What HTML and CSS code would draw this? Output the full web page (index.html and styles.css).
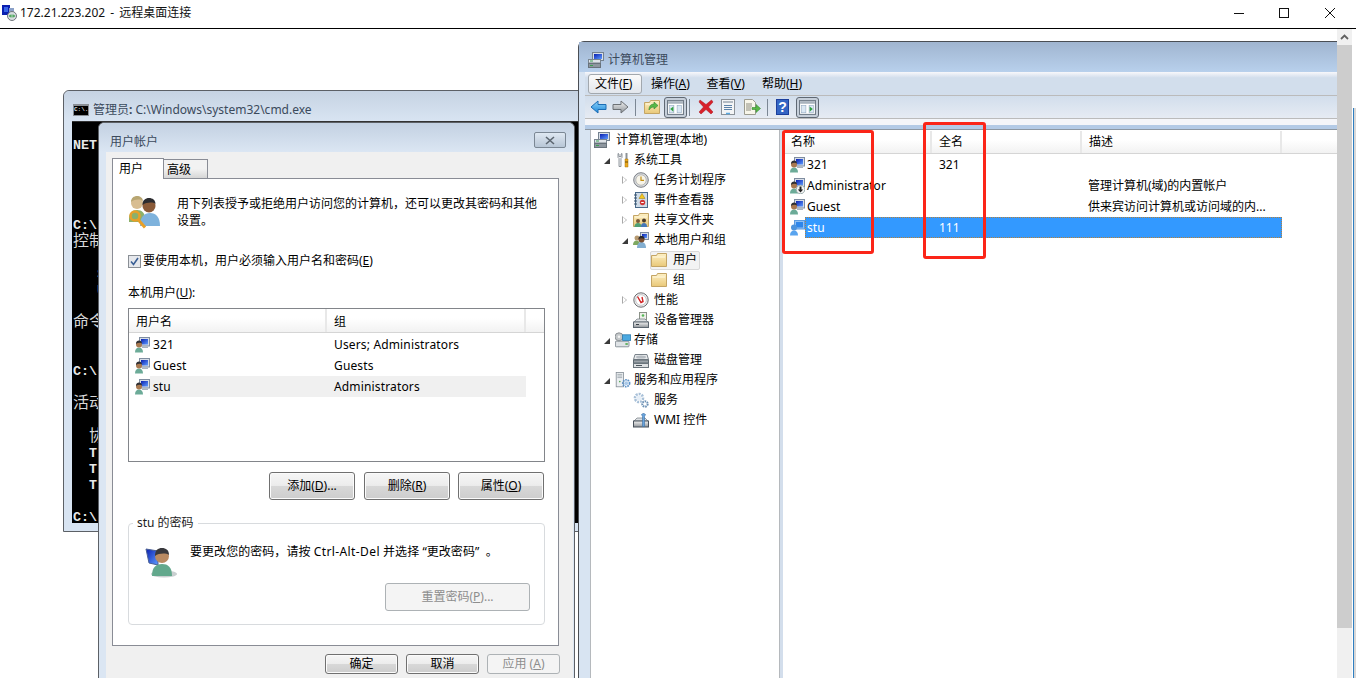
FILE: index.html
```html
<!DOCTYPE html>
<html lang="zh-CN">
<head>
<meta charset="utf-8">
<title>172.21.223.202 - 远程桌面连接</title>
<link rel="stylesheet" href="styles.css">
</head>
<body>
<svg class="defs" width="0" height="0" aria-hidden="true">
  <defs>
    <linearGradient id="gScreen" x1="0" y1="0" x2="1" y2="1"><stop offset="0" stop-color="#0a1fb0"/><stop offset="1" stop-color="#5f9cff"/></linearGradient>
    <linearGradient id="gFolder" x1="0" y1="0" x2="0" y2="1"><stop offset="0" stop-color="#fdf0c4"/><stop offset="1" stop-color="#e9c878"/></linearGradient>
    <linearGradient id="gBlueArrow" x1="0" y1="0" x2="0" y2="1"><stop offset="0" stop-color="#8fd4fb"/><stop offset="1" stop-color="#1c86d8"/></linearGradient>
    <linearGradient id="gGreyBox" x1="0" y1="0" x2="0" y2="1"><stop offset="0" stop-color="#f2f2f2"/><stop offset="1" stop-color="#8f9499"/></linearGradient>

    <symbol id="i-user" viewBox="0 0 16 16">
      <rect x="5.5" y="0.5" width="10" height="8.5" fill="#d6dde8" stroke="#7f8da0"/>
      <rect x="7" y="2" width="7" height="5.5" fill="url(#gScreen)"/>
      <path d="M8 9.5h6v1.5h-6z" fill="#aab4c0"/>
      <path d="M1 15.5c0-3.5 1.8-5 4-5s4 1.5 4 5z" fill="#6cab98"/>
      <circle cx="5" cy="7.5" r="3" fill="#a87850"/>
      <path d="M2 7c0-2.8 1.5-3.6 3-3.6S8 4.500 8 6.500C6.500 5.500 4 5.500 2 7z" fill="#2f2f33"/>
    </symbol>
    <symbol id="i-user-admin" viewBox="0 0 16 16">
      <use href="#i-user"/>
      <circle cx="11.500" cy="11.500" r="4.300" fill="#f4f4f4" stroke="#9aa"/>
      <path d="M10.500 8.500h2v3h1.700l-2.700 3-2.700-3h1.700z" fill="#222"/>
    </symbol>
    <symbol id="i-user-sel" viewBox="0 0 16 16">
      <rect x="5.500" y="0.500" width="10" height="8.500" fill="#8fc0f4" stroke="#5b9ae0"/>
      <rect x="7" y="2" width="7" height="5.500" fill="#2f86ea"/>
      <path d="M1 15.500c0-3.500 1.800-5 4-5s4 1.500 4 5z" fill="#59a4ef"/>
      <circle cx="5" cy="7.500" r="3" fill="#4c93dd"/>
    </symbol>
    <symbol id="i-users-key" viewBox="0 0 32 34">
      <path d="M1 24c0-6 3-9 8-9s8 3 8 9v3H1z" fill="#8cb06a"/>
      <circle cx="9" cy="8" r="6" fill="#d8bd92"/>
      <path d="M3 7c0-4 3-6 6-6s6 2 6 5c-3-2-8-2-12 1z" fill="#b8a672"/>
      <path d="M12 31c0-9 4-13 10-13s10 4 10 13z" fill="#7eb2dc"/>
      <circle cx="21" cy="11" r="6.500" fill="#8a5a38"/>
      <path d="M14.500 10c0-5 3-7 6.500-7s6.500 2 6.500 6c-2-2-9-2-13 1z" fill="#2c2c30"/>
      <circle cx="7" cy="21" r="4.500" fill="none" stroke="#e8a028" stroke-width="2.500"/>
      <path d="M10 24.500l7 8" stroke="#e8a028" stroke-width="3"/>
    </symbol>
    <symbol id="i-user-large" viewBox="0 0 32 32">
      <ellipse cx="19" cy="28" rx="13" ry="3.500" fill="#c9cfd0"/>
      <path d="M1 3l12 2v14L4 17z" fill="url(#gScreen)" stroke="#4a5f95"/>
      <path d="M7 30c0-9 4-12 10-12s10 3 10 12z" fill="#62a88c"/>
      <circle cx="17" cy="10" r="7" fill="#b98a62"/>
      <path d="M10 10c0-6 3-8 7-8s7 2 7 7c-3-2-10-2-14 1z" fill="#38383c"/>
    </symbol>
    <symbol id="i-mgmt" viewBox="0 0 16 16">
      <rect x="4.500" y="0.500" width="11" height="8" fill="#d8dfe8" stroke="#75828f"/>
      <rect x="6" y="2" width="8" height="5" fill="url(#gScreen)"/>
      <rect x="0.500" y="7.500" width="12" height="3.500" fill="#dfe3e8" stroke="#7a858f"/>
      <rect x="0.500" y="11.500" width="12" height="4" fill="#8e979f" stroke="#69737c"/>
      <path d="M2 9h3M2 13.500h3" stroke="#3ca050"/>
    </symbol>
    <symbol id="i-tools" viewBox="0 0 16 16">
      <path d="M3 1.500v4l1 1v8h2v-8l1-1v-4l-1 .5v2.500H4V2z" fill="#eef0f2" stroke="#7a8088" stroke-width=".8"/>
      <path d="M10.500 1h2v6h-2z" fill="#8d9296"/>
      <path d="M10 7h3v8h-3z" fill="#eaa81c" stroke="#a87408" stroke-width=".5"/>
      <path d="M10 10h3" stroke="#6d4f08"/>
    </symbol>
    <symbol id="i-clock" viewBox="0 0 16 16">
      <circle cx="8" cy="8" r="7.300" fill="#d6d9dc" stroke="#7c7f85"/>
      <circle cx="8" cy="8" r="5.200" fill="#f7f4e8" stroke="#9c9c9c" stroke-width=".6"/>
      <path d="M8 4.500V8.300H11" fill="none" stroke="#c49014" stroke-width="1.200"/>
    </symbol>
    <symbol id="i-event" viewBox="0 0 16 16">
      <rect x="2.500" y="0.500" width="12" height="15" fill="#cfdce8" stroke="#4a6a8a"/>
      <path d="M1 3h3M1 6h3M1 9h3M1 12h3" stroke="#36506a"/>
      <path d="M9 1.500l3 5H6z" fill="#f4c820" stroke="#9c7808" stroke-width=".5"/>
      <circle cx="9.500" cy="10.500" r="2.700" fill="#d03838"/>
      <path d="M8.200 10.500h2.600" stroke="#fff"/>
    </symbol>
    <symbol id="i-folder" viewBox="0 0 16 16">
      <path d="M.5 3.500v11h15v-13h-9l-1 2z" fill="url(#gFolder)" stroke="#c4a565" stroke-linejoin="round"/>
      <path d="M2 5h12" stroke="#fff8e0"/>
    </symbol>
    <symbol id="i-share" viewBox="0 0 16 16">
      <use href="#i-folder"/>
      <circle cx="5" cy="9" r="2" fill="#7a5a38"/>
      <path d="M1.500 15c0-3 1.500-4 3.500-4s3.500 1 3.500 4z" fill="#4f9f74"/>
      <circle cx="11" cy="8.500" r="2" fill="#4a3a2a"/>
      <path d="M8 15c0-3 1-4 3-4s3 1 3 4z" fill="#4578b8"/>
    </symbol>
    <symbol id="i-group" viewBox="0 0 16 16">
      <rect x="7.500" y="0.500" width="8" height="7" fill="#d6dde8" stroke="#7f8da0"/>
      <rect x="9" y="2" width="5" height="4" fill="url(#gScreen)"/>
      <path d="M0 13c0-3 1.500-4.500 3.500-4.500S7 10 7 13z" fill="#7ea860"/>
      <circle cx="4" cy="6" r="2.500" fill="#b79a70"/>
      <path d="M4 16c0-4 2-6 4.500-6S13 12 13 16z" fill="#83aed0"/>
      <circle cx="8.500" cy="7.500" r="3" fill="#7a4e30"/>
      <path d="M5.500 7c0-2.500 1.500-3 3-3s3 .5 3 3c-2-1-4-1-6 0z" fill="#2a2a2e"/>
    </symbol>
    <symbol id="i-perf" viewBox="0 0 16 16">
      <circle cx="8" cy="8" r="7.200" fill="#eceef0" stroke="#6d6d70"/>
      <circle cx="8" cy="8" r="5.300" fill="#fff" stroke="#a8a8a8" stroke-width=".6"/>
      <path d="M4.500 4.500l3.500 6 2-1-1-4.500" fill="none" stroke="#cf2020" stroke-width="1.400"/>
    </symbol>
    <symbol id="i-device" viewBox="0 0 16 16">
      <rect x="6.500" y="0.500" width="7" height="7" fill="#eef0ea" stroke="#8b9288"/>
      <circle cx="10" cy="3.500" r="1.300" fill="#58b858"/>
      <path d="M1 10l3-3h8l3 3z" fill="#dde0e3" stroke="#707880" stroke-width=".7"/>
      <rect x="0.500" y="10" width="15" height="5.500" fill="url(#gGreyBox)" stroke="#5c6670"/>
      <path d="M3 12.500h3" stroke="#384048"/>
    </symbol>
    <symbol id="i-storage" viewBox="0 0 20 20">
      <rect x="0.500" y="11.500" width="17" height="7" rx="1" fill="#dfe3e6" stroke="#747e86"/>
      <rect x="13" y="14" width="3" height="2" fill="#4ba84b"/>
      <circle cx="5" cy="6" r="5" fill="#c4c8ca" stroke="#7c8286"/>
      <circle cx="5" cy="6" r="1.500" fill="#f4f4f4"/>
      <rect x="9.500" y="3.500" width="10" height="7" fill="#4aa8e0" stroke="#2b7cb0"/>
    </symbol>
    <symbol id="i-disk" viewBox="0 0 16 16">
      <path d="M2 2.500h12l1.500 5H.5z" fill="#e6e8ea" stroke="#7a838b"/>
      <ellipse cx="8" cy="5" rx="5" ry="1.500" fill="#b6bcc2"/>
      <rect x="0.500" y="8" width="15" height="3" fill="#9ca3a9" stroke="#5f6a72"/>
      <rect x="0.500" y="11.500" width="15" height="4" fill="#dde0e2" stroke="#6a747c"/>
      <path d="M3 13.500h6" stroke="#4a545c"/>
    </symbol>
    <symbol id="i-service" viewBox="0 0 20 20">
      <rect x="1.500" y="0.500" width="9" height="18" fill="#eceff2" stroke="#838c94"/>
      <path d="M3 3h6M3 5h6M3 7h6" stroke="#9aa3aa"/>
      <circle cx="6" cy="12" r="1" fill="#4ba84b"/>
      <circle cx="14" cy="14" r="4.200" fill="none" stroke="#5f93c8" stroke-width="2.200" stroke-dasharray="2 1"/>
      <circle cx="14" cy="14" r="2.400" fill="#a8c8e8"/>
    </symbol>
    <symbol id="i-gears" viewBox="0 0 16 16">
      <circle cx="6" cy="6" r="4" fill="none" stroke="#a8c0d8" stroke-width="2.600" stroke-dasharray="2 1"/>
      <circle cx="6" cy="6" r="2.500" fill="#e6eef6"/>
      <circle cx="12" cy="12" r="2.700" fill="none" stroke="#6c90b4" stroke-width="2" stroke-dasharray="1.600 .8"/>
    </symbol>
    <symbol id="i-wmi" viewBox="0 0 16 16">
      <path d="M1 9l3-3h8l3 3z" fill="#dde0e3" stroke="#707880" stroke-width=".7"/>
      <rect x="0.500" y="9" width="15" height="6" fill="url(#gGreyBox)" stroke="#47505a"/>
      <path d="M11 1.500l1.500 1-1 2v10h-2v-10l-1-2 1.500-1z" fill="#6aa4dc" stroke="#3a6ea4" stroke-width=".6"/>
    </symbol>
    <symbol id="i-pane" viewBox="0 0 16 14">
      <rect x="0.500" y="0.500" width="15" height="13" fill="#fff" stroke="#6f7a86"/>
      <rect x="1" y="1" width="14" height="2.500" fill="#a9b3bd"/>
      <rect x="2.500" y="5" width="4" height="7" fill="#dbe8f4" stroke="#8ca4bc" stroke-width=".5"/>
      <rect x="9.500" y="5" width="4" height="7" fill="#dbe8f4" stroke="#8ca4bc" stroke-width=".5"/>
    </symbol>
    <symbol id="i-props" viewBox="0 0 16 16">
      <rect x="1.500" y="0.500" width="13" height="15" fill="#f4f5f6" stroke="#8c9298"/>
      <rect x="3" y="2" width="10" height="2" fill="#b4bcc4"/>
      <path d="M4 6.500h8M4 8.500h8M4 10.500h8" stroke="#5c82a8"/>
      <path d="M6 14.500h4" stroke="#5aa8e0" stroke-width="1.500"/>
    </symbol>
    <symbol id="i-export" viewBox="0 0 18 16">
      <path d="M1.500.5h8l3 3v12h-11z" fill="#f8f6ea" stroke="#9c9c90"/>
      <path d="M3 5h6M3 7h6M3 9h5M3 11h5" stroke="#8c8c80"/>
      <path d="M9 8.500h4v-3l4.500 4-4.500 4v-3H9z" fill="#58b848" stroke="#388a30" stroke-width=".6"/>
    </symbol>
  </defs>
</svg>

<header class="rdp-title">
  <svg class="rdp-icon" viewBox="0 0 16 16" width="16" height="16"><rect x="0" y="0" width="8" height="10" fill="#0a1fb0"/><rect x="2" y="2" width="4" height="5" fill="#3a66e8"/><rect x="7" y="3" width="5" height="6" fill="#8aa0c8"/><circle cx="10" cy="11" r="4.500" fill="#d8dde0" stroke="#70767c"/><path d="M7.500 11h5M9 9.500l-1.500 1.500L9 12.500M11 9.500l1.500 1.500L11 12.500" fill="none" stroke="#2c9a3c"/></svg>
  <span class="rdp-text">172.21.223.202 - 远程桌面连接</span>
  <div class="win-controls">
    <svg width="12" height="12" viewBox="0 0 12 12"><path d="M1 6.500h10" stroke="#111"/></svg>
    <svg width="12" height="12" viewBox="0 0 12 12"><rect x="1.500" y="1.500" width="9" height="9" fill="none" stroke="#111"/></svg>
    <svg width="12" height="12" viewBox="0 0 12 12"><path d="M1 1l10 10M11 1L1 11" stroke="#111"/></svg>
  </div>
</header>

<main class="desktop">

  <section class="cmd">
    <div class="cmd-title">
      <span class="cmd-icon">C:\.</span>
      <span class="glass-text"><span>管理员</span><b>:</b> C:\Windows\system32\cmd.exe</span>
    </div>
<pre class="console">

<b>NET</b>




<b>C:\</b>
<span class="cjk">控制</span>

   S
   U

<span class="cjk">命令</span>


<b>C:\</b>

<span class="cjk">活动</span>

  <span class="cjk">协</span>
  <b>T</b>
  <b>T</b>
  <b>T</b>

<b>C:\</b></pre>
  </section>

  <section class="dialog">
    <div class="dlg-title">
      <span class="glass-text dlg-name">用户帐户</span>
      <button class="dlg-close" aria-label="关闭"><svg width="10" height="9" viewBox="0 0 10 9"><path d="M1 1l8 7M9 1L1 8" stroke="#5c6670" stroke-width="1.600"/></svg></button>
    </div>
    <div class="dlg-body">
      <div class="tabs">
        <span class="tab tab-on">用户</span>
        <span class="tab tab-off">高级</span>
      </div>
      <div class="tab-page">
        <div class="intro">
          <svg class="intro-icon" width="32" height="34"><use href="#i-users-key"/></svg>
          <p class="intro-text">用下列表授予或拒绝用户访问您的计算机，还可以更改其密码和其他设置。</p>
        </div>
        <label class="check-row">
          <svg class="check" width="13" height="13" viewBox="0 0 13 13"><rect x=".5" y=".5" width="12" height="12" fill="#e6e8ec" stroke="#8a8f95"/><path d="M3 6.500l2.500 3 4.500-6.500" fill="none" stroke="#3a5f95" stroke-width="1.600"/></svg>
          <span>要使用本机，用户必须输入用户名和密码(<u>E</u>)</span>
        </label>
        <div class="list-label">本机用户(<u>U</u>):</div>
        <div class="listbox">
          <div class="list-head">
            <span class="lh lh-name">用户名</span>
            <span class="lh lh-group">组</span>
            <span class="lh lh-rest"></span>
          </div>
          <div class="list-row"><svg class="row-icon" width="16" height="16"><use href="#i-user"/></svg><span class="cell-name">321</span><span class="cell-group">Users; Administrators</span></div>
          <div class="list-row"><svg class="row-icon" width="16" height="16"><use href="#i-user"/></svg><span class="cell-name">Guest</span><span class="cell-group">Guests</span></div>
          <div class="list-row is-hover"><svg class="row-icon" width="16" height="16"><use href="#i-user"/></svg><span class="cell-name">stu</span><span class="cell-group">Administrators</span></div>
        </div>
        <div class="btn-row">
          <button class="btn btn-list">添加(<u>D</u>)...</button>
          <button class="btn btn-list">删除(<u>R</u>)</button>
          <button class="btn btn-list">属性(<u>O</u>)</button>
        </div>
        <fieldset class="pw-group">
          <legend>stu 的密码</legend>
          <div class="pw-row">
            <svg width="32" height="32"><use href="#i-user-large"/></svg>
            <p>要更改您的密码，请按 <span class="wide">Ctrl-Alt-Del</span> 并选择 “更改密码”&nbsp;&nbsp;。</p>
          </div>
          <div class="pw-actions"><button class="btn btn-reset" disabled>重置密码(<u>P</u>)...</button></div>
        </fieldset>
      </div>
      <div class="dlg-actions">
        <button class="btn btn-dlg">确定</button>
        <button class="btn btn-dlg">取消</button>
        <button class="btn btn-dlg" disabled>应用 (<u>A</u>)</button>
      </div>
    </div>
  </section>

  <section class="mmc">
    <div class="mmc-title">
      <svg width="16" height="16"><use href="#i-mgmt"/></svg>
      <span class="glass-text">计算机管理</span>
    </div>
    <nav class="menu">
      <span class="menu-item is-open">文件(<u>F</u>)</span>
      <span class="menu-item">操作(<u>A</u>)</span>
      <span class="menu-item">查看(<u>V</u>)</span>
      <span class="menu-item">帮助(<u>H</u>)</span>
    </nav>
    <div class="toolbar">
      <svg class="tool" width="17" height="14" viewBox="0 0 17 14"><path d="M16 4.500H8V1L1 7l7 6V9.500h8z" fill="url(#gBlueArrow)" stroke="#1c6cb4"/></svg>
      <svg class="tool" width="17" height="14" viewBox="0 0 17 14"><path d="M1 4.500h8V1l7 6-7 6V9.500H1z" fill="url(#gGreyBox)" stroke="#6d7176"/></svg>
      <i class="tool-sep"></i>
      <svg class="tool tool-up" width="16" height="16" viewBox="0 0 16 16"><use href="#i-folder"/><path d="M5 11c0-4 2-6 5-6V3l4 3.500L10 10V8c-2 0-4 1-5 3z" fill="#58b848" stroke="#388a30" stroke-width=".6"/></svg>
      <span class="tool-toggle"><svg width="17" height="15" viewBox="0 0 16 14"><use href="#i-pane"/><path d="M6 6v5l-3-2.500z" fill="#30a040"/></svg></span>
      <i class="tool-sep"></i>
      <svg class="tool tool-x" width="16" height="16" viewBox="0 0 16 16"><path d="M2 1l6 4.500L13.500 1 15 3l-4.500 5L15 13l-2 2-5-4.500L3 15l-2-2 4.500-5L1 3z" fill="#d8202a" stroke="#a8141c" stroke-width=".5"/></svg>
      <svg class="tool" width="16" height="16"><use href="#i-props"/></svg>
      <svg class="tool tool-export" width="18" height="16"><use href="#i-export"/></svg>
      <i class="tool-sep"></i>
      <svg class="tool" width="13" height="16" viewBox="0 0 13 16"><rect width="13" height="16" fill="#1c3f9c"/><rect x="1" y="1" width="11" height="14" fill="#3465c4"/><text class="help-q" x="6.500" y="13">?</text></svg>
      <span class="tool-toggle tool-toggle-end"><svg width="17" height="15" viewBox="0 0 16 14"><use href="#i-pane"/><path d="M10 6v5l3-2.500z" fill="#30a040"/></svg></span>
    </div>
    <div class="mmc-strip"></div>
    <div class="panes">
      <div class="tree">
        <div class="node"><i class="tw"></i><svg width="16" height="16"><use href="#i-mgmt"/></svg><span>计算机管理(本地)</span></div>
        <div class="node l1"><i class="tw open"></i><svg width="16" height="16"><use href="#i-tools"/></svg><span>系统工具</span></div>
        <div class="node l2"><i class="tw closed"></i><svg width="16" height="16"><use href="#i-clock"/></svg><span>任务计划程序</span></div>
        <div class="node l2"><i class="tw closed"></i><svg width="16" height="16"><use href="#i-event"/></svg><span>事件查看器</span></div>
        <div class="node l2"><i class="tw closed"></i><svg width="16" height="16"><use href="#i-share"/></svg><span>共享文件夹</span></div>
        <div class="node l2"><i class="tw open"></i><svg width="16" height="16"><use href="#i-group"/></svg><span>本地用户和组</span></div>
        <div class="node l3"><div class="sel-box"><svg width="16" height="16"><use href="#i-folder"/></svg><span>用户</span></div></div>
        <div class="node l3"><div class="plain-box"><svg width="16" height="16"><use href="#i-folder"/></svg><span>组</span></div></div>
        <div class="node l2"><i class="tw closed"></i><svg width="16" height="16"><use href="#i-perf"/></svg><span>性能</span></div>
        <div class="node l2"><i class="tw"></i><svg width="16" height="16"><use href="#i-device"/></svg><span>设备管理器</span></div>
        <div class="node l1"><i class="tw open"></i><svg width="16" height="16" viewBox="0 0 20 20"><use href="#i-storage"/></svg><span>存储</span></div>
        <div class="node l2"><i class="tw"></i><svg width="16" height="16"><use href="#i-disk"/></svg><span>磁盘管理</span></div>
        <div class="node l1"><i class="tw open"></i><svg width="16" height="16" viewBox="0 0 20 20"><use href="#i-service"/></svg><span>服务和应用程序</span></div>
        <div class="node l2"><i class="tw"></i><svg width="16" height="16"><use href="#i-gears"/></svg><span>服务</span></div>
        <div class="node l2"><i class="tw"></i><svg width="16" height="16"><use href="#i-wmi"/></svg><span>WMI 控件</span></div>
      </div>
      <div class="detail">
        <div class="detail-head">
          <span class="dh dh-name">名称</span>
          <span class="dh dh-full">全名</span>
          <span class="dh dh-desc">描述</span>
          <span class="dh dh-rest"></span>
        </div>
        <div class="d-row"><svg width="16" height="16"><use href="#i-user"/></svg><div class="d-cells"><span class="dc-name">321</span><span class="dc-full">321</span><span class="dc-desc"></span></div></div>
        <div class="d-row"><svg width="16" height="16"><use href="#i-user-admin"/></svg><div class="d-cells"><span class="dc-name">Administrator</span><span class="dc-full"></span><span class="dc-desc">管理计算机(域)的内置帐户</span></div></div>
        <div class="d-row"><svg width="16" height="16"><use href="#i-user"/></svg><div class="d-cells"><span class="dc-name">Guest</span><span class="dc-full"></span><span class="dc-desc">供来宾访问计算机或访问域的内...</span></div></div>
        <div class="d-row"><svg width="16" height="16"><use href="#i-user-sel"/></svg><div class="d-cells is-selected"><span class="dc-name">stu</span><span class="dc-full">111</span><span class="dc-desc"></span></div></div>
      </div>
    </div>
  </section>

  <div class="mark mark-name"></div>
  <div class="mark mark-full"></div>

  <div class="scrollbar">
    <div class="sb-btn"><svg width="9" height="6" viewBox="0 0 9 6"><path d="M1 5l3.500-3.500L8 5" fill="none" stroke="#606060" stroke-width="1.800"/></svg></div>
    <div class="sb-thumb"></div>
    <div class="sb-track"></div>
  </div>
  <div class="edge"></div>
</main>
</body>
</html>
```

FILE: styles.css
```css
* { box-sizing: border-box; }

html, body { margin: 0; height: 100%; }

body {
  width: 1356px;
  height: 678px;
  overflow: hidden;
  display: flex;
  flex-direction: column;
  background: #fff;
  color: #000;
  font-family: "Noto Sans", "Noto Sans CJK SC", sans-serif;
  font-size: 12px;
  line-height: 16px;
}

.defs { position: absolute; }

p { margin: 0; }
u { text-decoration: underline; text-underline-offset: 1px; }

/* remote desktop frame */
.rdp-title {
  flex: none;
  height: 29px;
  display: flex;
  align-items: center;
  padding: 0 20px 3px 2px;
  border-bottom: 1px solid #000;
  background: #fff;
}
.rdp-icon { flex: none; margin-top: 1px; }
.rdp-text { margin-left: 2px; color: #111; word-spacing: 2px; }
.win-controls {
  margin-left: auto;
  display: flex;
  gap: 33px;
}
.win-controls svg:last-child { margin-left: 1px; }

.desktop { position: relative; flex: 1; background: #fff; overflow: hidden; }

.glass-text { color: #3b4a5c; }

/* cmd window */
.cmd {
  position: absolute;
  left: 63px;
  top: 61px;
  width: 530px;
  height: 442px;
  border: 1px solid #5c6066;
  border-radius: 6px 6px 0 0;
  background: #d8e4f2;
  padding: 0 8px 8px;
  display: flex;
  flex-direction: column;
}
.cmd-title {
  flex: none;
  height: 30px;
  margin: 0 -8px;
  padding: 7px 0 0 9px;
  display: flex;
  align-items: center;
  gap: 4px;
  background: linear-gradient(#c6d3e3, #d8e4f2);
  border-radius: 6px 6px 0 0;
}
.cmd-icon {
  width: 16px;
  height: 12px;
  border: 1px solid #8a8f95;
  border-top-width: 2px;
  background: #000;
  color: #ddd;
  font: bold 6px/8px "Liberation Mono", monospace;
  overflow: hidden;
  text-align: center;
}
.console {
  flex: 1;
  margin: 0;
  padding: 0 1px;
  background: #000;
  color: #d8d8d8;
  font: 13.330px/16px "Liberation Mono", "Noto Sans CJK SC", monospace;
  overflow: hidden;
  white-space: pre;
  border-top: 1px solid #333;
}
.console b { color: #e8e8e8; }
.console .cjk { font-size: 16px; line-height: 16px; }

/* user accounts dialog */
.dialog {
  position: absolute;
  left: 98px;
  top: 93px;
  width: 477px;
  height: 570px;
  border: 1px solid #5c6066;
  border-radius: 6px 6px 0 0;
  background: #dbe6f3;
  padding: 0 1px 0 7px;
  display: flex;
  flex-direction: column;
}
.dlg-title {
  flex: none;
  height: 29px;
  margin: 0 -1px 0 -7px;
  padding: 5px 8px 0 11px;
  display: flex;
  align-items: center;
  justify-content: space-between;
  background: linear-gradient(#c3d1e2, #dbe6f3);
  border-radius: 6px 6px 0 0;
}
.dlg-name { margin-top: 3px; }
.dlg-close {
  width: 32px;
  height: 16px;
  padding: 0;
  display: flex;
  align-items: center;
  justify-content: center;
  border: 1px solid #7b8794;
  border-radius: 2px;
  background: linear-gradient(#dfe8f2, #b8c6d6);
}
.dlg-body {
  flex: 1;
  background: #f0f0f0;
  padding: 6px 13px 0 6px;
  display: flex;
  flex-direction: column;
  min-height: 0;
}
.tabs { display: flex; align-items: flex-end; height: 20px; position: relative; z-index: 1; }
.tab { display: block; border: 1px solid #898c95; }
.tab-on {
  width: 52px;
  height: 21px;
  padding: 2px 0 0 6px;
  background: #fff;
  border-bottom: 0;
  margin-bottom: -1px;
}
.tab-off {
  width: 44px;
  height: 19px;
  padding: 2px 0 0 3px;
  border-left: 0;
  border-bottom: 0;
  background: linear-gradient(#f2f2f2 50%, #d6d6d6);
}
.tab-page {
  flex: none;
  height: 468px;
  margin: 0 1px 0 0;
  background: #fff;
  border: 1px solid #898c95;
  padding: 0 13px 0 15px;
  display: flex;
  flex-direction: column;
}
.intro { display: flex; height: 65px; padding-top: 16px; }
.intro-icon { flex: none; }
.intro-text { margin: 0 0 0 17px; width: 364px; line-height: 17px; }
.check-row { display: flex; align-items: center; gap: 2px; height: 16px; margin-top: 9px; }
.list-label { margin-top: 16px; height: 16px; }
.listbox {
  margin-top: 7px;
  height: 154px;
  border: 1px solid #82858a;
}
.list-head {
  display: flex;
  height: 24px;
  border-bottom: 1px solid #d5d5d5;
  background: linear-gradient(#fff 40%, #f2f2f2);
  align-items: stretch;
}
.lh { display: flex; align-items: center; padding-left: 7px; border-right: 2px solid #e8e8e8; padding-top: 2px; }
.lh-name { width: 198px; }
.lh-group { width: 199px; }
.lh-rest { flex: 1; border-right: 0; }
.list-row {
  display: flex;
  align-items: center;
  height: 21px;
  padding-left: 5px;
  width: 397px;
}
.listbox .list-row:nth-child(2) { margin-top: 1px; }
.row-icon { flex: none; margin-right: 2px; }
.cell-name { width: 182px; padding-left: 1px; letter-spacing: .1px; }
.cell-group { flex: 1; letter-spacing: .15px; }
.is-hover { background: linear-gradient(90deg, #fff 21px, #f0f0f0 21px); }

.btn-row { display: flex; justify-content: flex-end; gap: 9px; margin-top: 10px; padding-right: 1px; }
.btn-row .btn:last-child { margin-left: -1px; }
.btn {
  font: inherit;
  color: #000;
  padding: 0;
  border: 1px solid #707070;
  border-radius: 3px;
  background: linear-gradient(#f6f6f6, #ececec 48%, #d8d8d8 50%, #cdcdcd);
  box-shadow: inset 0 0 0 1px #fbfbfb;
}
.btn:disabled {
  color: #8d8d8d;
  background: #f4f4f4;
  border-color: #adb2b5;
  box-shadow: none;
}
.btn-list { width: 86px; height: 28px; }
.btn-reset { width: 145px; height: 28px; }
.btn-dlg { width: 73px; height: 20px; }

.pw-group {
  margin: 16px 0 0;
  padding: 0 14px 0 16px;
  height: 109px;
  border: 1px solid #d8dbde;
  border-radius: 4px;
}
.pw-group legend {
  margin-left: -12px;
  padding: 0 4px;
  line-height: 14px;
  color: #1b1b1b;
}
.pw-row { display: flex; gap: 13px; height: 48px; padding-top: 10px; }
.pw-row svg { flex: none; margin-top: 6px; }
.pw-row p { padding-top: 4px; white-space: nowrap; letter-spacing: .05px; }
.wide { letter-spacing: .4px; }
.pw-actions { display: flex; justify-content: flex-end; margin-top: 5px; }

.dlg-actions { display: flex; justify-content: flex-end; gap: 8px; margin-top: 8px; }

/* computer management window */
.mmc {
  position: absolute;
  left: 578px;
  top: 12px;
  width: 778px;
  height: 640px;
  border: 1px solid #4a4e54;
  border-radius: 6px 0 0 0;
  background: #d8e4f2;
  display: flex;
  flex-direction: column;
}
.mmc-title {
  flex: none;
  height: 30px;
  display: flex;
  align-items: center;
  gap: 4px;
  padding: 6px 0 0 9px;
  background: linear-gradient(#a0b5d0, #b8d0ec);
}
.menu {
  flex: none;
  height: 24px;
  margin-left: 6px;
  display: flex;
  align-items: center;
  padding-left: 3px;
  background: linear-gradient(#f8f8fb, #d2deec 25%);
  border-bottom: 1px solid #bbb;
}
.menu-item { width: 55.500px; padding-left: 7px; }
.is-open {
  width: 54px;
  margin-right: 2px;
  padding-left: 6px;
  line-height: 18px;
  height: 20px;
  border: 1px solid #a2a8ae;
  border-radius: 3px;
  background: linear-gradient(#fafafa, #e2e6ec);
}
.toolbar {
  flex: none;
  height: 23px;
  margin-left: 6px;
  display: flex;
  align-items: center;
  padding-left: 5px;
  background: linear-gradient(#d2deec, #e6ebf3);
  border-bottom: 1px solid #bbb;
}
.tool { flex: none; margin-right: 5px; }
.tool-up { margin-right: 4px; }
.tool-x { margin-right: 6px; }
.tool-export { margin-left: 2px; }
.tool-sep { width: 1px; height: 17px; background: #7c8794; margin: 0 8px 0 1px; }
.tool-toggle {
  width: 23px;
  height: 21px;
  margin-right: 1px;
  display: flex;
  align-items: center;
  justify-content: center;
  border: 1px solid #5f6873;
  border-radius: 3px;
  background: #c6cfda;
}
.tool-toggle-end { margin-left: 2px; }
.help-q { font: bold 14px "Liberation Sans", sans-serif; fill: #fff; text-anchor: middle; }
.mmc-strip {
  flex: none;
  height: 11px;
  margin-left: 6px;
  background: linear-gradient(#f4f5f9 55%, #b3cae6 55%);
  border-bottom: 1px solid #8d97a2;
}
.panes {
  flex: 1;
  min-height: 0;
  margin-left: 11px;
  display: flex;
  background: #d3deec;
  gap: 3px;
}
.tree {
  flex: none;
  width: 190px;
  background: #fff;
  border: 1px solid #b5b9bd;
  border-top: 0;
  padding: 0 0 0 3px;
}
.node { display: flex; align-items: center; height: 20px; }
.node > .tw { flex: none; width: 0; position: relative; display: block; height: 9px; }
.node.l1 { padding-left: 7px; }
.node.l2 { padding-left: 25px; }
.node.l3 { padding-left: 56px; }
.node.l1 > .tw, .node.l2 > .tw { width: 14px; }
.node > svg { flex: none; margin-right: 6px; }
.node.l1 > svg { margin-right: 3px; }
.node.l2 > svg { margin-right: 5px; }
.tw.open::before {
  content: "";
  position: absolute;
  left: 3px;
  top: 2px;
  border-style: solid;
  border-width: 0 0 6px 6px;
  border-color: transparent transparent #3a3a3a;
}
.tw.closed::before {
  content: "";
  position: absolute;
  left: 3px;
  top: 0;
  border-style: solid;
  border-width: 4.500px 0 4.500px 5px;
  border-color: transparent transparent transparent #a8a8a8;
}
.tw.closed::after {
  content: "";
  position: absolute;
  left: 4px;
  top: 1.500px;
  border-style: solid;
  border-width: 3px 0 3px 3.300px;
  border-color: transparent transparent transparent #fff;
}
.sel-box, .plain-box {
  display: flex;
  align-items: center;
  gap: 6px;
  height: 20px;
  padding-left: 1px;
  white-space: nowrap;
}
.sel-box {
  width: 50px;
  padding-left: 0;
  border: 1px solid #d9d9d9;
  border-radius: 2px;
  background: #f3f3f3;
  height: 19px;
}
.detail { flex: 1; min-width: 0; background: #fff; padding-top: 1px; border-top: 1px solid #8d97a2; margin-top: -1px; }
.detail-head {
  display: flex;
  height: 23px;
  border-bottom: 1px solid #d5d5d5;
  background: linear-gradient(#fff 40%, #f2f2f2);
}
.dh { display: flex; align-items: center; padding-left: 8px; border-right: 2px solid #e8e8e8; }
.dh-name { width: 149px; }
.dh-full { width: 150px; padding-left: 7px; }
.dh-desc { width: 200px; padding-left: 7px; }
.dh-rest { flex: 1; border-right: 0; }
.d-row { display: flex; align-items: center; height: 21px; padding-left: 6px; }
.d-row svg { flex: none; }
.d-cells { display: flex; align-items: center; height: 21px; width: 477px; }
.is-selected {
  background: #3399ff;
  color: #fff;
  outline: 1px dotted #b08040;
  outline-offset: -1px;
}
.dc-name { width: 134px; padding-left: 2px; white-space: nowrap; letter-spacing: .08px; }
.dc-full { width: 149px; }
.dc-desc { flex: 1; white-space: nowrap; }

/* red annotation frames drawn over the screenshot */
.mark {
  position: absolute;
  border: 3px solid #fb2518;
  border-radius: 3px;
}
.mark-name { left: 782px; top: 101px; width: 92px; height: 124px; }
.mark-full { left: 923px; top: 93px; width: 63px; height: 137px; }

/* remote session scrollbar */
.scrollbar {
  position: absolute;
  left: 1337px;
  top: 0;
  bottom: 0;
  width: 15px;
  display: flex;
  flex-direction: column;
  background: #f0f0f0;
}
.sb-btn { flex: none; height: 16px; display: flex; align-items: center; justify-content: center; }
.sb-thumb { flex: none; height: 583px; background: #cdcdcd; }
.sb-track { flex: 1; }
.edge {
  position: absolute;
  left: 1352px;
  top: 0;
  bottom: 0;
  width: 4px;
  background: #fff;
}
.edge::before {
  content: "";
  position: absolute;
  left: 1px;
  top: 79px;
  bottom: 0;
  width: 3px;
  border-left: 1px solid #2f7fc1;
  background: #d8d8d8;
}
```
